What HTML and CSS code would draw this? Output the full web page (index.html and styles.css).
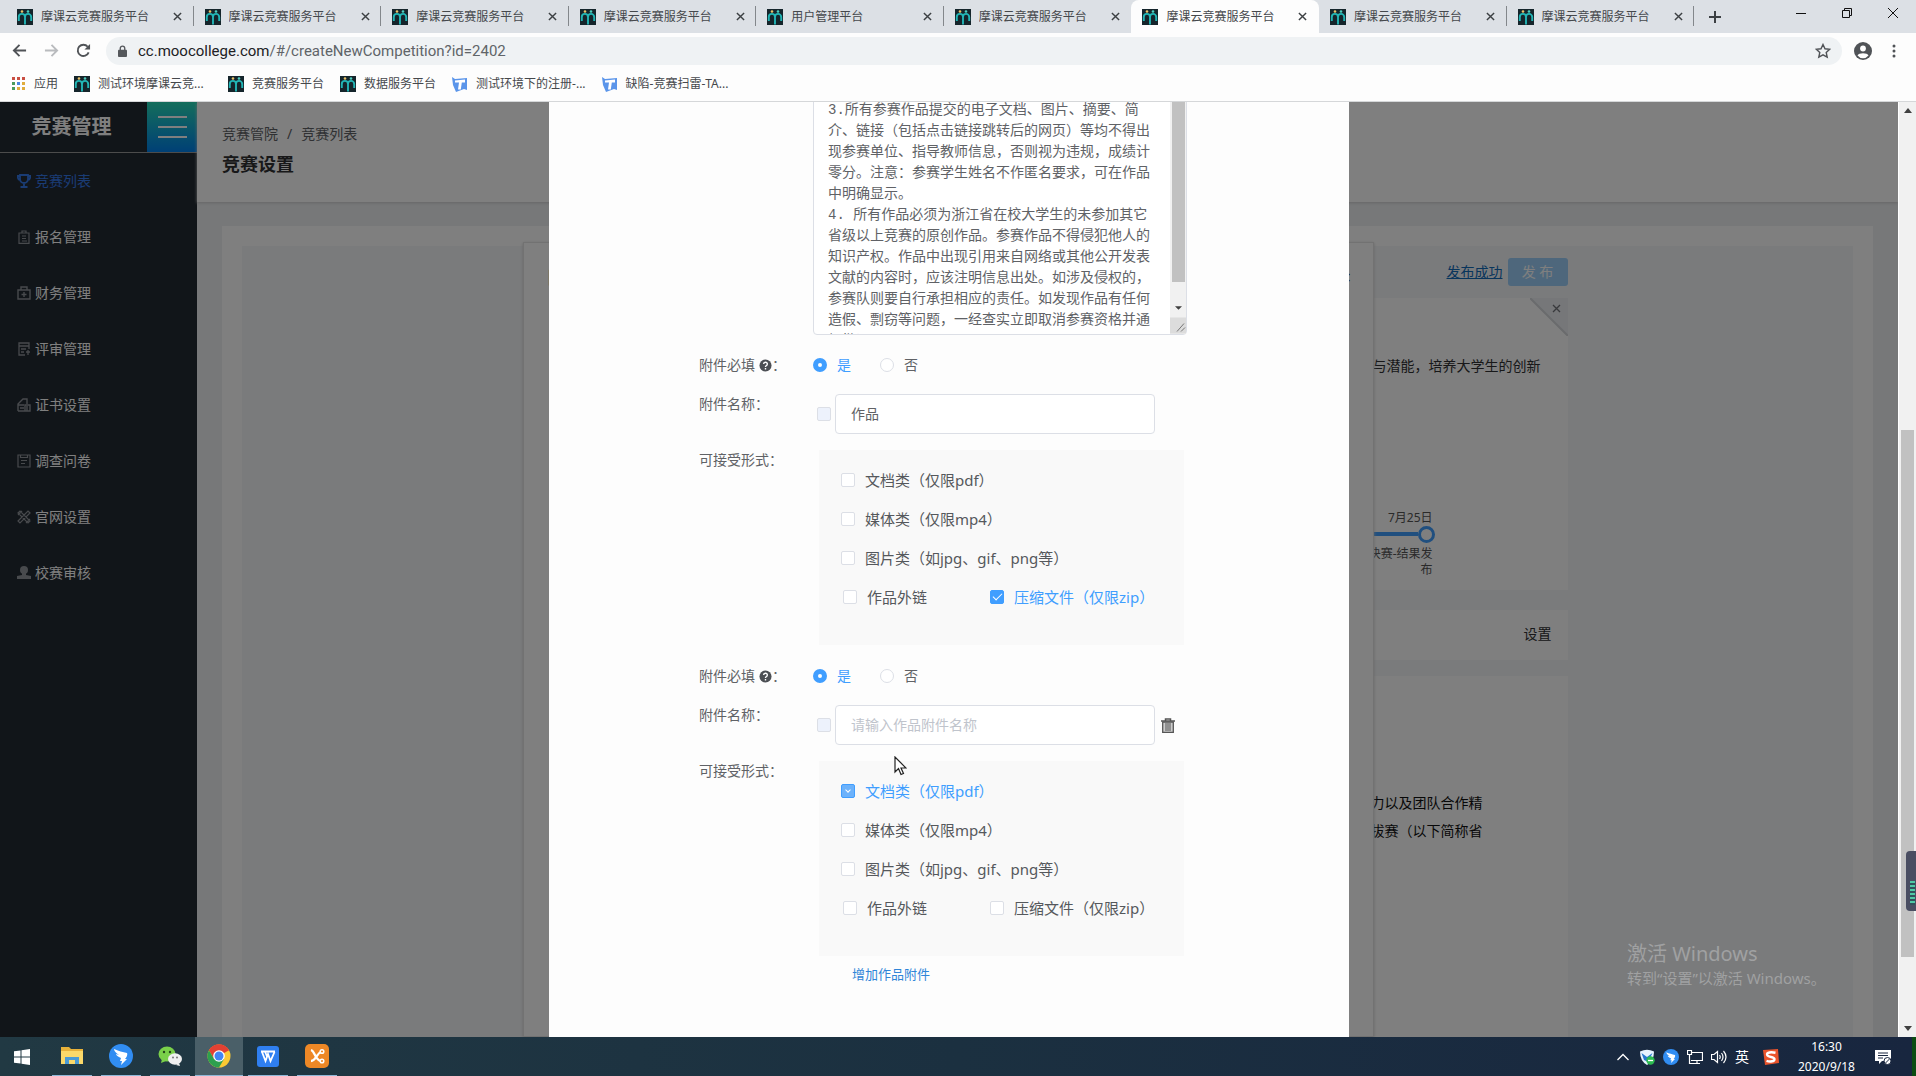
FILE: index.html
```html
<!DOCTYPE html>
<html lang="zh-CN">
<head>
<meta charset="utf-8">
<title>摩课云竞赛服务平台</title>
<link rel="stylesheet" href="styles.css">
</head>
<body>
<svg class="defs" aria-hidden="true">
  <symbol id="moo" viewBox="0 0 16 16"><rect width="16" height="16" fill="#15252b"/><circle cx="5" cy="2.500" r="1.300" fill="#e9c46a"/><circle cx="11" cy="2.500" r="1.300" fill="#4fd0c0"/><path d="M1.800 12V8a3 3 0 0 1 6.200 0v7.500M8 8a3 3 0 0 1 6.200 0v4" fill="none" stroke="#22b5b5" stroke-width="1.900"/></symbol>
  <symbol id="tapd" viewBox="0 0 16 16"><path d="M0 1l3 2 12-1v12l-3-1-8 3L1 9z" fill="#5b95ea"/><path d="M3 4.500l10-1v3H9.800l-1 7H6l1-7H3z" fill="#fff"/></symbol>
  <symbol id="x" viewBox="0 0 10 10"><path d="M1 1l8 8M9 1L1 9" stroke="currentColor" stroke-width="1.600" fill="none"/></symbol>
  <symbol id="bird" viewBox="0 0 24 24"><circle cx="12" cy="12" r="12" fill="#318df2"/><path d="M5 5c4 2 9 3 13 4 1 2-1 5-2 6h2l-6 6 1-4h-2l1-3c-3-1-5-3-5-4l3 1C7 9 5 7 5 5z" fill="#fff"/></symbol>
  <symbol id="help" viewBox="0 0 14 14"><circle cx="7" cy="7" r="6.500" fill="#4c4f54"/><path d="M5 5.500a2 2 0 1 1 2.600 1.900Q7 7.700 7 8.500M7 9.800v1.400" fill="none" stroke="#fff" stroke-width="1.500"/></symbol>
</svg>

<header class="browser">
  <div class="tabstrip">
    <div class="tabs">
      <div class="tab"><svg class="fav"><use href="#moo"/></svg><span>摩课云竞赛服务平台</span><button aria-label="关闭"><svg><use href="#x"/></svg></button></div>
      <div class="tab"><svg class="fav"><use href="#moo"/></svg><span>摩课云竞赛服务平台</span><button aria-label="关闭"><svg><use href="#x"/></svg></button></div>
      <div class="tab"><svg class="fav"><use href="#moo"/></svg><span>摩课云竞赛服务平台</span><button aria-label="关闭"><svg><use href="#x"/></svg></button></div>
      <div class="tab"><svg class="fav"><use href="#moo"/></svg><span>摩课云竞赛服务平台</span><button aria-label="关闭"><svg><use href="#x"/></svg></button></div>
      <div class="tab"><svg class="fav"><use href="#moo"/></svg><span>用户管理平台</span><button aria-label="关闭"><svg><use href="#x"/></svg></button></div>
      <div class="tab before"><svg class="fav"><use href="#moo"/></svg><span>摩课云竞赛服务平台</span><button aria-label="关闭"><svg><use href="#x"/></svg></button></div>
      <div class="tab active"><svg class="fav"><use href="#moo"/></svg><span>摩课云竞赛服务平台</span><button aria-label="关闭"><svg><use href="#x"/></svg></button></div>
      <div class="tab after"><svg class="fav"><use href="#moo"/></svg><span>摩课云竞赛服务平台</span><button aria-label="关闭"><svg><use href="#x"/></svg></button></div>
      <div class="tab"><svg class="fav"><use href="#moo"/></svg><span>摩课云竞赛服务平台</span><button aria-label="关闭"><svg><use href="#x"/></svg></button></div>
    </div>
    <button class="newtab" aria-label="新标签页"><svg viewBox="0 0 12 12"><path d="M6 0v12M0 6h12" stroke="#3c4043" stroke-width="2"/></svg></button>
    <div class="winctl">
      <button aria-label="最小化"><svg viewBox="0 0 10 10"><path d="M0 5.500h10" stroke="#111"/></svg></button>
      <button aria-label="还原"><svg viewBox="0 0 10 10"><path d="M.5 2.500h7v7h-7zM2.500 2.500v-2h7v7h-2" fill="none" stroke="#111"/></svg></button>
      <button aria-label="关闭窗口"><svg viewBox="0 0 10 10"><path d="M0 0l10 10M10 0L0 10" stroke="#111"/></svg></button>
    </div>
  </div>
  <div class="toolbar">
    <button aria-label="后退"><svg viewBox="0 0 16 16"><path d="M15 8H2M8 2L2 8l6 6" fill="none" stroke="#505357" stroke-width="2"/></svg></button>
    <button aria-label="前进"><svg viewBox="0 0 16 16"><path d="M1 8h13M8 2l6 6-6 6" fill="none" stroke="#b9bbbe" stroke-width="2"/></svg></button>
    <button aria-label="刷新"><svg viewBox="0 0 16 16"><path d="M13.500 10A6 6 0 1 1 12.500 4" fill="none" stroke="#505357" stroke-width="2"/><path d="M15 1v6H9z" fill="#505357"/></svg></button>
    <div class="omnibox">
      <svg class="lock" viewBox="0 0 10 14"><rect y="5" width="10" height="8" rx="1" fill="#55585c"/><path d="M2.500 6V3.500a2.500 2.500 0 0 1 5 0V6" fill="none" stroke="#55585c" stroke-width="1.500"/></svg>
      <div class="url"><b>cc.moocollege.com</b>/#/createNewCompetition?id=2402</div>
      <svg class="star" viewBox="0 0 16 16"><path d="M8 1.500l2 4.300 4.700.5-3.500 3.200 1 4.700L8 11.800l-4.200 2.400 1-4.700L1.300 6.300l4.700-.5z" fill="none" stroke="#505357" stroke-width="1.400"/></svg>
    </div>
    <button class="user" aria-label="用户"><svg viewBox="0 0 18 18"><circle cx="9" cy="9" r="9" fill="#505357"/><circle cx="9" cy="6.500" r="2.900" fill="#fff"/><path d="M3.500 13.500c1-3 10-3 11 0a7 7 0 0 1-11 0z" fill="#fff"/></svg></button>
    <button class="more" aria-label="更多"><svg viewBox="0 0 4 14"><g fill="#505357"><circle cx="2" cy="2" r="1.500"/><circle cx="2" cy="7" r="1.500"/><circle cx="2" cy="12" r="1.500"/></g></svg></button>
  </div>
  <nav class="bookmarks">
    <a href="#" class="apps"><svg viewBox="0 0 14 14"><path d="M0 0h3v3H0zM5 0h3v3H5zM10 0h3v3h-3z" fill="#c94f43"/><path d="M0 5h3v3H0zM0 10h3v3H0z" fill="#4a9b5c"/><path d="M5 5h3v3H5z" fill="#4a86e0"/><path d="M10 5h3v3h-3zM5 10h3v3H5zM10 10h3v3h-3z" fill="#e0ac3c"/></svg>应用</a>
    <a href="#" class="wide"><svg class="fav"><use href="#moo"/></svg>测试环境摩课云竞...</a>
    <a href="#"><svg class="fav"><use href="#moo"/></svg>竞赛服务平台</a>
    <a href="#"><svg class="fav"><use href="#moo"/></svg>数据服务平台</a>
    <a href="#"><svg class="fav"><use href="#tapd"/></svg>测试环境下的注册-...</a>
    <a href="#"><svg class="fav"><use href="#tapd"/></svg>缺陷-竞赛扫雷-TA...</a>
  </nav>
</header>

<div class="screen">
  <div class="view">
    <aside class="sidebar">
      <div class="brand"><strong>竞赛管理</strong><button aria-label="菜单"><i></i><i></i><i></i></button></div>
      <nav class="menu">
        <a href="#" class="on"><svg viewBox="0 0 14 14"><path d="M3 1h8v4a4 4 0 0 1-8 0zM3 2H.7c0 3 1 4 3 4M11 2h2.300c0 3-1 4-3 4M7 9v4M3.500 13h7" fill="none" stroke="currentColor" stroke-width="1.800"/></svg>竞赛列表</a>
        <a href="#"><svg viewBox="0 0 14 14"><path d="M2 3h10v10.300H2zM5 3V1h4v2M5 6h4M5 8.500h4M5 11h5" fill="none" stroke="currentColor" stroke-width="1.200"/></svg>报名管理</a>
        <a href="#"><svg viewBox="0 0 14 14"><path d="M1 4h12v9H1zM4 4V1h6v3M7 6v5M4.500 8.500h5" fill="none" stroke="currentColor" stroke-width="1.400"/></svg>财务管理</a>
        <a href="#"><svg viewBox="0 0 14 14"><path d="M12 7V1H2v12h6M2 4h10M4 7h5M4 10h3M9 10h4M11 8v5" fill="none" stroke="currentColor" stroke-width="1.300"/></svg>评审管理</a>
        <a href="#"><svg viewBox="0 0 14 14"><path d="M1 13V6l5-5h4v5M1 7h6M3 10h4M8 13V7h5v6zM10 8v5M1 13h7" fill="none" stroke="currentColor" stroke-width="1.400"/></svg>证书设置</a>
        <a href="#"><svg viewBox="0 0 14 14"><path d="M1 1h12v12H1zM3.500 1v2.500h7V1M4 6.500h6M4 9.500h4" fill="none" stroke="currentColor" stroke-width="1.200"/></svg>调查问卷</a>
        <a href="#"><svg viewBox="0 0 14 14"><path d="M1 3l2-2 10 10-2 2zM13 3l-2-2L1 11l2 2zM1 5l4-4M9 13l4-4" fill="none" stroke="currentColor" stroke-width="1.200"/></svg>官网设置</a>
        <a href="#"><svg viewBox="0 0 14 14"><circle cx="7" cy="4" r="4" fill="currentColor"/><path d="M5 7h4v2l5 1v3H0v-3l5-1z" fill="currentColor"/></svg>校赛审核</a>
      </nav>
    </aside>
    <main class="page">
      <header class="pagehead">
        <nav><a href="#">竞赛管院</a><span>/</span><a href="#">竞赛列表</a></nav>
        <h1>竞赛设置</h1>
      </header>
      <div class="sheet">
        <div class="board">
          <div class="column">
            <div class="publish"><a href="#">发布成功</a><button>发 布</button></div>
            <section class="card intro">
              <button class="corner" aria-label="关闭"><svg viewBox="0 0 38 38"><path d="M0 0h38v38z" fill="#eceef2"/><path d="M0 0l38 38" stroke="#d4d6da" stroke-width="2"/><path d="M23 7l7 7M30 7l-7 7" stroke="#707279" stroke-width="1.300"/></svg></button>
              <p>与潜能，培养大学生的创新</p>
              <div class="step"><time>7月25日</time><div class="track"><i></i></div><div class="steplabel">决赛-结果发布</div></div>
            </section>
            <section class="card setting"><a href="#">设置</a></section>
            <section class="card detail">力以及团队合作精<br>拔赛（以下简称省</section>
          </div>
        </div>
      </div>
    </main>
    <section class="panel"><span>日</span><span>×</span></section>

    <div class="backdrop">
      <form class="dialog">
        <div class="notes">
          <textarea aria-label="作品要求">3.所有参赛作品提交的电子文档、图片、摘要、简
介、链接（包括点击链接跳转后的网页）等均不得出
现参赛单位、指导教师信息，否则视为违规，成绩计
零分。注意：参赛学生姓名不作匿名要求，可在作品
中明确显示。
4. 所有作品必须为浙江省在校大学生的未参加其它
省级以上竞赛的原创作品。参赛作品不得侵犯他人的
知识产权。作品中出现引用来自网络或其他公开发表
文献的内容时，应该注明信息出处。如涉及侵权的，
参赛队则要自行承担相应的责任。如发现作品有任何
造假、剽窃等问题，一经查实立即取消参赛资格并通
报批评。</textarea>
          <div class="bar"><div class="thumb"></div><svg class="down" viewBox="0 0 8 4"><path d="M0 0h8L4 4z" fill="#404040"/></svg><svg class="grip" viewBox="0 0 16 16"><rect width="16" height="16" fill="#dcdcdc"/><path d="M7 14l7-8M11 14l4-4" stroke="#777"/></svg></div>
        </div>

        <fieldset class="group">
          <div class="row required">
            <span class="label">附件必填<svg class="help"><use href="#help"/></svg>：</span>
            <label><input type="radio" name="r1" checked>是</label>
            <label><input type="radio" name="r1">否</label>
          </div>
          <div class="row name">
            <label class="label" for="n1">附件名称：</label>
            <input type="checkbox" disabled aria-label="选择附件一">
            <input type="text" id="n1" value="作品">
          </div>
          <div class="row forms">
            <span class="label">可接受形式：</span>
            <div class="formats">
              <div><label><input type="checkbox">文档类（仅限pdf）</label></div>
              <div><label><input type="checkbox">媒体类（仅限mp4）</label></div>
              <div><label><input type="checkbox">图片类（如jpg、gif、png等）</label></div>
              <div class="pair"><label><input type="checkbox">作品外链</label><label><input type="checkbox" checked>压缩文件（仅限zip）</label></div>
            </div>
          </div>
        </fieldset>

        <fieldset class="group">
          <div class="row required">
            <span class="label">附件必填<svg class="help"><use href="#help"/></svg>：</span>
            <label><input type="radio" name="r2" checked>是</label>
            <label><input type="radio" name="r2">否</label>
          </div>
          <div class="row name">
            <label class="label" for="n2">附件名称：</label>
            <input type="checkbox" disabled aria-label="选择附件二">
            <input type="text" id="n2" placeholder="请输入作品附件名称">
            <button type="button" class="trash" aria-label="删除"><svg viewBox="0 0 14 15"><path d="M0 3h14M4.500 3V1h5v2" fill="none" stroke="#555" stroke-width="1.500"/><path d="M1.700 4v10.300h10.600V4z" fill="#ccc" stroke="#555" stroke-width="1.300"/><path d="M5 5v8M7 5v8M9 5v8" stroke="#555"/></svg></button>
          </div>
          <div class="row forms">
            <span class="label">可接受形式：</span>
            <div class="formats">
              <div><label><input type="checkbox" class="changing" checked>文档类（仅限pdf）</label></div>
              <div><label><input type="checkbox">媒体类（仅限mp4）</label></div>
              <div><label><input type="checkbox">图片类（如jpg、gif、png等）</label></div>
              <div class="pair"><label><input type="checkbox">作品外链</label><label><input type="checkbox">压缩文件（仅限zip）</label></div>
            </div>
          </div>
        </fieldset>
        <a href="#" class="add">增加作品附件</a>
      </form>
    </div>
    <div class="watermark"><b>激活 Windows</b><span>转到“设置”以激活 Windows。</span></div>
  </div>
  <div class="scroll"><svg viewBox="0 0 8 5"><path d="M0 5h8L4 0z" fill="#404040"/></svg><div class="rail"><div></div></div><svg viewBox="0 0 8 5"><path d="M0 0h8L4 5z" fill="#404040"/></svg></div>
</div>

<footer class="taskbar">
  <div class="pins">
    <button class="start" aria-label="开始"><svg viewBox="0 0 16 16"><path d="M0 2.300l6.500-.9v6H0zM7.500 1.200L16 0v7.500H7.500zM0 8.500h6.500v6L0 13.700zM7.500 8.500H16V16l-8.500-1.200z" fill="#fff"/></svg></button>
    <button class="run" aria-label="文件资源管理器"><svg viewBox="0 0 24 24"><path d="M1 3h8l2 2h12v15H1z" fill="#e8b23a"/><path d="M1 7h22v13H1z" fill="#fbd96a"/><path d="M5 20v-7h14v7h-4v-4H9v4z" fill="#4b9bd5"/></svg></button>
    <button class="run" aria-label="钉钉"><svg><use href="#bird"/></svg></button>
    <button class="run" aria-label="微信"><svg viewBox="0 0 24 24"><ellipse cx="9" cy="10" rx="8.500" ry="7.500" fill="#7ad04a"/><path d="M4 15l-1 4 5-2z" fill="#7ad04a"/><circle cx="6" cy="8" r="1.200" fill="#23461a"/><circle cx="12" cy="8" r="1.200" fill="#23461a"/><ellipse cx="17" cy="15" rx="7" ry="5.800" fill="#f0f0f0"/><path d="M21 19l1 3-4-1z" fill="#f0f0f0"/><circle cx="15" cy="13.500" r="1" fill="#777"/><circle cx="19" cy="13.500" r="1" fill="#777"/></svg></button>
    <button class="run current" aria-label="Chrome"><svg viewBox="0 0 24 24"><circle cx="12" cy="12" r="11.500" fill="#fbc934"/><path d="M12 12L2 6.200A11.500 11.500 0 0 1 22 6.200z" fill="#e34133"/><path d="M12 6.200h10A11.500 11.500 0 0 0 2 6.200L7 15z" fill="#e34133"/><path d="M2 6.200A11.500 11.500 0 0 0 12 23.500L17 15H7z" fill="#2da04e"/><circle cx="12" cy="12" r="5.800" fill="#fff"/><circle cx="12" cy="12" r="4.500" fill="#4285f4"/></svg></button>
    <button class="run" aria-label="WPS"><svg viewBox="0 0 24 24"><rect x="1" y="2" width="22" height="21" rx="3" fill="#2f7ff0"/><path d="M5 7.500h14M6 8l3.500 9L12 10l2.500 7L18.500 8M9 7.500l2 5" fill="none" stroke="#fff" stroke-width="1.800"/></svg></button>
    <button class="run" aria-label="XMind"><svg viewBox="0 0 24 24"><rect width="24" height="24" rx="5" fill="#ee8826"/><path d="M6 6c4 1 4 10 10 11M6 17c5 0 6-8 10-9" fill="none" stroke="#fff" stroke-width="2.300"/><circle cx="17" cy="7.500" r="1.800" fill="none" stroke="#fff" stroke-width="1.500"/><circle cx="17" cy="17" r="1.800" fill="none" stroke="#fff" stroke-width="1.500"/></svg></button>
  </div>
  <div class="tray">
    <svg viewBox="0 0 16 16"><path d="M2.500 11L8 5.500l5.500 5.500" fill="none" stroke="#fff" stroke-width="1.300"/></svg>
    <svg viewBox="0 0 16 16"><path d="M1 2.500Q8-1 15 2.500 15 12 8 16 1 12 1 2.500z" fill="#e7f3ff"/><path d="M2.500 4L8 8l5.500-4L9 13 5 11z" fill="#2678cf"/><circle cx="11.500" cy="11.500" r="4.200" fill="#2dbb51"/><path d="M9 11.500h5" stroke="#fff" stroke-width="1.300"/></svg>
    <svg><use href="#bird"/></svg>
    <svg viewBox="0 0 16 16"><path d="M4 3.500h11.500v8H4M8 14.500h5M10 11.500v3M.5 1.500h4v4h-4zM2.500 5.500v9H8" fill="none" stroke="#fff" stroke-width="1.200"/></svg>
    <svg viewBox="0 0 16 16"><path d="M.5 5.500h2.500l3.500-3v11l-3.500-3H.5zM8.500 6q1.500 2 0 4M10.500 4q3 4 0 8M12.500 2q5 6 0 12" fill="none" stroke="#fff" stroke-width="1.200"/></svg>
    <span>英</span>
    <svg class="sogou" viewBox="0 0 16 16"><path d="M0 1l15-1 1 14-14 2z" fill="#ea542c"/><path d="M12.500 3.700C5 2.300 3 4.500 4.500 6.500S11 7.500 11.500 10 7 13 3.500 11.800" fill="none" stroke="#fff" stroke-width="2.400"/></svg>
    <div class="clock"><span>16:30</span><span>2020/9/18</span></div>
    <svg class="note" viewBox="0 0 16 16"><path d="M0 1h16v11H7l-3 3v-3H0z" fill="#fff"/><path d="M3 4h10M3 6.500h10M3 9h5" stroke="#1a2740"/><circle cx="12.500" cy="12" r="3.500" fill="#fff" stroke="#1a2740"/><path d="M10.500 14l4-4" stroke="#1a2740"/></svg>
  </div>
</footer>
<div class="meter"><i></i></div>
<svg class="cursor" viewBox="0 0 13 20"><path d="M1 1v15l3.500-3.500L7 18.500l2.500-1L7 12h5z" fill="#fff" stroke="#222" stroke-width="1.200"/></svg>
</body>
</html>
```
FILE: styles.css
```css
* { box-sizing: border-box; }
body {
  margin: 0;
  height: 100vh;
  display: flex;
  flex-direction: column;
  overflow: hidden;
  position: relative;
  font: 14px/20px "Noto Sans", "Noto Sans CJK SC", sans-serif;
  color: #606266;
  background: #fdfdfd;
}
button { padding: 0; border: 0; background: none; font: inherit; color: inherit; display: flex; align-items: center; justify-content: center; }
a { color: inherit; text-decoration: none; }
svg { display: block; flex: none; }
.defs { position: absolute; width: 0; height: 0; }
.fav { width: 16px; height: 16px; }

/* browser chrome */
.browser { border-bottom: 1px solid #d5d7d9; font-size: 12px; color: #45484c; }
.tabstrip { display: flex; height: 33px; background: #dce0e5; padding-left: 6px; }
.tabs { display: flex; flex: 0 1 1688px; min-width: 0; }
.tab { flex: 1; min-width: 0; display: flex; align-items: center; padding: 0 10px 0 11px; position: relative; }
.tab span { flex: 1; margin-left: 8px; white-space: nowrap; overflow: hidden; }
.tab::after { content: ""; position: absolute; right: 0; top: 6px; height: 20px; width: 1px; background: #83878b; }
.tab.before::after, .tab.active::after { display: none; }
.tab.active { background: #fdfdfd; border-radius: 8px 8px 0 0; }
.tab button { width: 12px; height: 12px; color: #3c4043; }
.tab button svg { width: 9px; height: 9px; }
.newtab { width: 42px; }
.newtab svg { width: 12px; height: 12px; }
.winctl { margin-left: auto; display: flex; height: 26px; }
.winctl button { width: 46px; }
.winctl svg { width: 10px; height: 10px; }
.toolbar { display: flex; height: 35px; align-items: center; padding: 0 12px 0 10px; }
.toolbar > button { width: 18px; margin-right: 14px; }
.toolbar > button svg { width: 15px; height: 15px; }
.toolbar .omnibox { flex: 1; height: 28px; border-radius: 14px; background: #eff2f4; display: flex; align-items: center; padding: 0 11px 0 12px; margin: 1px 12px 0 0; }
.lock { width: 9px; height: 13px; margin-right: 11px; }
.url { flex: 1; font: 15px/20px Roboto, sans-serif; color: #606468; }
.url b { font-weight: 400; color: #202124; }
.star { width: 16px; height: 16px; }
.toolbar > .user { margin-right: 12px; }
.toolbar > .user svg { width: 18px; height: 18px; }
.toolbar > .more { margin: 0; width: 20px; }
.toolbar > .more svg { width: 4px; height: 14px; }
.bookmarks { display: flex; height: 33px; align-items: center; padding: 0 12px 2px; gap: 16px; }
.bookmarks a { display: flex; align-items: center; gap: 8px; white-space: nowrap; }
.apps svg { width: 14px; height: 14px; }
.bookmarks .wide { width: 138px; }

/* page viewport */
.screen { flex: 1; min-height: 0; display: flex; }
.view { flex: 1; min-width: 0; display: flex; position: relative; overflow: hidden; }
.sidebar { width: 197px; background: #222a32; color: #fff; flex: none; }
.brand { display: flex; height: 50px; align-items: center; }
.brand strong { flex: 1; padding-right: 4px; text-align: center; font-size: 20px; }
.brand button { width: 50px; height: 50px; flex-direction: column; gap: 8px; background: linear-gradient(#28dcb8, #0080ec); }
.brand i { width: 29px; height: 2px; background: #fff; }
.menu { border-top: 1px solid #999; }
.menu a { display: flex; align-items: center; height: 56px; padding-left: 17px; gap: 4px; }
.menu svg { width: 14px; height: 14px; color: #90949a; }
.menu .on, .menu .on svg { color: #3478e8; }
.page { flex: 1; min-width: 0; background: #eef0f2; display: flex; flex-direction: column; }
.pagehead { height: 100px; background: #fff; padding: 22px 25px 0; box-shadow: 0 1px 3px #ccc; flex: none; }
.pagehead nav { display: flex; gap: 9px; }
h1 { margin: 8px 0 0; font-size: 18px; line-height: 24px; color: #303133; }
.sheet { flex: 1; margin: 24px 25px 0; padding: 20px 20px 0; background: #fff; display: flex; }
.board { flex: 1; background: #f5f7f9; }
.column { max-width: 1040px; height: 100%; margin: 0 auto; display: flex; flex-direction: column; color: #303133; }
.publish { display: flex; justify-content: flex-end; align-items: center; gap: 5px; height: 52px; }
.publish a { color: #106ab8; text-decoration: underline; }
.publish button { width: 60px; height: 28px; border-radius: 3px; color: #fff; background: #9ccff8; }
.card { background: #fff; text-align: right; }
.intro { height: 292px; margin-bottom: 20px; position: relative; padding: 58px 27px 0; }
.intro p { margin: 0; }
.corner { position: absolute; right: 0; top: 0; }
.corner svg { width: 38px; height: 38px; }
.step { margin-top: 134px; padding-right: 108px; font-size: 12px; line-height: 16px; color: #555; display: flex; flex-direction: column; align-items: flex-end; }
.track { height: 16px; width: 160px; margin: 0 -2px 4px 0; display: flex; align-items: center; }
.track::before { content: ""; flex: 1; height: 4px; background: #409eff; }
.track i { width: 17px; height: 17px; border: 3px solid #409eff; border-radius: 50%; }
.steplabel { width: 72px; }
.setting { height: 50px; padding: 14px 16px; margin-bottom: 16px; }
.detail { flex: 1; padding: 113px 85px 0; line-height: 28px; color: #111; }
.panel { position: absolute; top: 140px; bottom: 0; left: 50%; width: 851px; margin-left: -426px; background: #fff; border: 1px solid #e4e4e4; box-shadow: 0 1px 3px #ccc; padding: 22px; display: flex; justify-content: space-between; font-size: 18px; line-height: 24px; color: #303133; }

/* dialog */
.backdrop { position: absolute; inset: 0; background: rgba(0, 0, 0, .5); display: flex; justify-content: center; }
.dialog { width: 800px; background: #fdfdfd; padding: 0 150px; color: #606266; }
.notes { position: relative; width: 374px; margin: -9px 0 0 114px; }
textarea { display: block; width: 100%; height: 242px; padding: 6px 14px; border: 1px solid #dcdfe6; border-radius: 4px; overflow: hidden; resize: none; background: #fff; color: #606266; white-space: pre; font: 14px/21px "Liberation Mono", "Noto Sans CJK SC", monospace; }
.bar { position: absolute; top: 1px; bottom: 1px; right: 1px; width: 16px; background: #f1f1f1; display: flex; flex-direction: column; align-items: center; justify-content: space-between; }
.thumb { width: 13px; height: 188px; background: #c1c1c1; }
.down { width: 7px; height: 4px; margin-top: 16px; }
.grip { width: 16px; height: 17px; }
.group { border: 0; margin: 10px 0 0; padding: 0; min-width: 0; }
.group + .group { margin-top: 11px; }
.row { display: flex; }
.label { width: 114px; flex: none; white-space: nowrap; display: flex; align-items: center; }
.help { width: 13px; height: 13px; margin: 0 0 0 4px; }
.required { height: 40px; align-items: center; gap: 29px; }
.required .label { margin-right: -29px; }
.required label { display: flex; align-items: center; gap: 10px; }
.required label:has(:checked) { color: #409eff; }
input { margin: 0; font: inherit; flex: none; }
input[type="radio"], input[type="checkbox"] { appearance: none; width: 14px; height: 14px; border: 1px solid #dcdfe6; border-radius: 2px; background: #fff; display: flex; align-items: center; justify-content: center; }
input[type="radio"] { border-radius: 50%; }
input[type="radio"]:checked { border: 5px solid #409eff; }
input[type="checkbox"]:checked { background: #409eff; border-color: #409eff; }
input[type="checkbox"]:checked::after { content: ""; width: 4px; height: 8px; border: solid #fff; border-width: 0 1px 1px 0; transform: rotate(45deg); margin-top: -2px; }
input[type="checkbox"].changing { background: #6cb2fb; }
input[type="checkbox"].changing::after { width: 3px; height: 3px; }
.name { margin-top: 9px; height: 40px; align-items: center; }
.name .label { align-self: flex-start; }
.name input[type="checkbox"] { margin: 0 4px; background: #edf2fc; }
input[type="text"] { width: 320px; height: 40px; border: 1px solid #dcdfe6; border-radius: 4px; padding: 0 15px 2px; color: #606266; background: #fff; }
input::placeholder { color: #c0c4cc; }
.trash { margin-left: 6px; }
.trash svg { width: 14px; height: 15px; }
.forms { margin-top: 16px; }
.forms .label { height: 20px; }
.formats { width: 365px; margin-left: 6px; padding: 10px 22px 29px; background: #f9f9f9; font-size: 15px; color: #55585c; }
.formats > div { height: 39px; display: flex; align-items: center; }
.formats label { display: flex; align-items: center; gap: 10px; white-space: nowrap; }
.formats label:has(:checked) { color: #409eff; }
.formats .pair { padding-left: 2px; gap: 63px; }
.add { display: block; margin: 8px 0 0 153px; font-size: 13px; color: #2f85d8; }

.watermark { position: absolute; right: 70px; bottom: 49px; width: 201px; color: #a0a1a2; display: flex; flex-direction: column; white-space: nowrap; font-size: 15px; }
.watermark b { font-weight: 400; font-size: 20px; line-height: 28px; }
.scroll { width: 18px; flex: none; background: #f1f1f1; border-left: 1px solid #fff; display: flex; flex-direction: column; align-items: center; padding: 6px 0; }
.scroll svg { width: 8px; height: 5px; }
.rail { flex: 1; width: 13px; display: flex; flex-direction: column; padding: 317px 0 69px; }
.rail div { flex: 1; background: #c1c1c1; }

/* taskbar */
.taskbar { height: 39px; flex: none; display: flex; justify-content: space-between; color: #fff; background: linear-gradient(90deg, #213943, #1b3040 50%, #18263f); border-right: 4px solid #0b4d12; }
.pins { display: flex; gap: 9px; }
.pins button { width: 40px; }
.pins .start { width: 43px; }
.start svg { width: 16px; height: 16px; }
.run { border-bottom: 1px solid #8fb8d8; }
.run svg { width: 24px; height: 24px; }
.pins .current { width: 48px; margin: 0 -4px; background: #4a5f68; }
.tray { display: flex; align-items: center; gap: 8px; padding-right: 21px; }
.tray svg { width: 16px; height: 16px; }
.tray span { line-height: 20px; }
.tray .sogou { margin-left: 6px; }
.clock { width: 75px; margin-left: 2px; font-size: 12px; display: flex; flex-direction: column; text-align: center; }
.tray .note { margin-left: 3px; }
.meter { position: absolute; right: 0; top: 851px; width: 10px; height: 60px; border-radius: 4px 0 0 4px; background: #4a4e62; padding: 30px 0 6px 4px; display: flex; }
.meter i { width: 5px; background: repeating-linear-gradient(#4fc9a5 0 2px, #33505c 2px 4px); }
.cursor { position: absolute; left: 894px; top: 756px; width: 13px; height: 20px; }
```
